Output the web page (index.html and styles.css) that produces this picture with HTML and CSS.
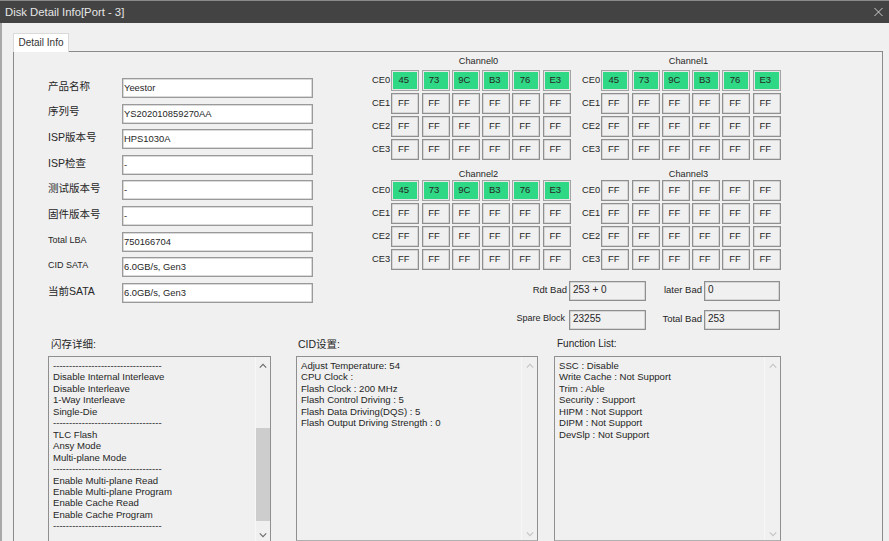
FILE: index.html
```html
<!DOCTYPE html>
<html>
<head>
<meta charset="utf-8">
<title>Disk Detail Info</title>
<link rel="stylesheet" href="styles.css">
</head>
<body>
<div class="window">
  <div class="titlebar"><span>Disk Detail Info[Port - 3]</span><svg class="close" viewBox="0 0 10 10"><path d="M.5.5l9 9M9.5.5l-9 9" fill="none" stroke="#dcdcdc" stroke-width="1"/></svg></div>
  <div class="client">
    <div class="tab">Detail Info</div>
    <div class="panel">
      <div class="top">
        <div class="form">
          <label>产品名称</label><div class="edit">Yeestor</div>
          <label>序列号</label><div class="edit">YS202010859270AA</div>
          <label>ISP版本号</label><div class="edit">HPS1030A</div>
          <label>ISP检查</label><div class="edit">-</div>
          <label>测试版本号</label><div class="edit">-</div>
          <label>固件版本号</label><div class="edit">-</div>
          <label class="small">Total LBA</label><div class="edit">750166704</div>
          <label class="small">CID SATA</label><div class="edit">6.0GB/s, Gen3</div>
          <label>当前SATA</label><div class="edit">6.0GB/s, Gen3</div>
        </div>
        <div class="right">
          <div class="channels">
            <div class="channel"><div class="ch-title">Channel0</div>
              <div class="grid">
                <span class="ce">CE0</span><b class="on">45</b><b class="on">73</b><b class="on">9C</b><b class="on">B3</b><b class="on">76</b><b class="on">E3</b>
                <span class="ce">CE1</span><b>FF</b><b>FF</b><b>FF</b><b>FF</b><b>FF</b><b>FF</b>
                <span class="ce">CE2</span><b>FF</b><b>FF</b><b>FF</b><b>FF</b><b>FF</b><b>FF</b>
                <span class="ce">CE3</span><b>FF</b><b>FF</b><b>FF</b><b>FF</b><b>FF</b><b>FF</b>
              </div></div>
            <div class="channel"><div class="ch-title">Channel1</div>
              <div class="grid">
                <span class="ce">CE0</span><b class="on">45</b><b class="on">73</b><b class="on">9C</b><b class="on">B3</b><b class="on">76</b><b class="on">E3</b>
                <span class="ce">CE1</span><b>FF</b><b>FF</b><b>FF</b><b>FF</b><b>FF</b><b>FF</b>
                <span class="ce">CE2</span><b>FF</b><b>FF</b><b>FF</b><b>FF</b><b>FF</b><b>FF</b>
                <span class="ce">CE3</span><b>FF</b><b>FF</b><b>FF</b><b>FF</b><b>FF</b><b>FF</b>
              </div></div>
            <div class="channel"><div class="ch-title low">Channel2</div>
              <div class="grid">
                <span class="ce">CE0</span><b class="on">45</b><b class="on">73</b><b class="on">9C</b><b class="on">B3</b><b class="on">76</b><b class="on">E3</b>
                <span class="ce">CE1</span><b>FF</b><b>FF</b><b>FF</b><b>FF</b><b>FF</b><b>FF</b>
                <span class="ce">CE2</span><b>FF</b><b>FF</b><b>FF</b><b>FF</b><b>FF</b><b>FF</b>
                <span class="ce">CE3</span><b>FF</b><b>FF</b><b>FF</b><b>FF</b><b>FF</b><b>FF</b>
              </div></div>
            <div class="channel"><div class="ch-title low">Channel3</div>
              <div class="grid">
                <span class="ce">CE0</span><b>FF</b><b>FF</b><b>FF</b><b>FF</b><b>FF</b><b>FF</b>
                <span class="ce">CE1</span><b>FF</b><b>FF</b><b>FF</b><b>FF</b><b>FF</b><b>FF</b>
                <span class="ce">CE2</span><b>FF</b><b>FF</b><b>FF</b><b>FF</b><b>FF</b><b>FF</b>
                <span class="ce">CE3</span><b>FF</b><b>FF</b><b>FF</b><b>FF</b><b>FF</b><b>FF</b>
              </div></div>
          </div>
          <div class="stats">
            <span class="st-l">Rdt Bad</span><div class="st-v">253 + 0</div>
            <span class="st-l">later Bad</span><div class="st-v">0</div>
            <span class="st-l wide">Spare Block</span><div class="st-v">23255</div>
            <span class="st-l">Total Bad</span><div class="st-v">253</div>
          </div>
        </div>
      </div>
      <div class="lists">
        <div class="group g1">
          <div class="g-title">闪存详细:</div>
          <div class="listbox">
            <div class="listtext">----------------------------------
Disable Internal Interleave
Disable Interleave
1-Way Interleave
Single-Die
----------------------------------
TLC Flash
Ansy Mode
Multi-plane Mode
----------------------------------
Enable Multi-plane Read
Enable Multi-plane Program
Enable Cache Read
Enable Cache Program
----------------------------------</div>
            <div class="scroll"><svg class="arrow" viewBox="0 0 10 6"><path d="M1 5l4-4 4 4" fill="none" stroke="#6a6a6a" stroke-width="1.4"/></svg><div class="track"><div class="thumb"></div></div><svg class="arrow" viewBox="0 0 10 6"><path d="M1 1l4 4 4-4" fill="none" stroke="#6a6a6a" stroke-width="1.4"/></svg></div>
          </div>
        </div>
        <div class="group g2">
          <div class="g-title">CID设置:</div>
          <div class="listbox">
            <div class="listtext">Adjust Temperature: 54
CPU Clock :
Flash Clock : 200 MHz
Flash Control Driving : 5
Flash Data Driving(DQS) : 5
Flash Output Driving Strength : 0</div>
            <div class="scroll idle"><svg class="arrow" viewBox="0 0 10 6"><path d="M1 5l4-4 4 4" fill="none" stroke="#c4c4c4" stroke-width="1.4"/></svg><div class="track"></div><svg class="arrow" viewBox="0 0 10 6"><path d="M1 1l4 4 4-4" fill="none" stroke="#c4c4c4" stroke-width="1.4"/></svg></div>
          </div>
        </div>
        <div class="group g3">
          <div class="g-title">Function List:</div>
          <div class="listbox">
            <div class="listtext">SSC : Disable
Write Cache : Not Support
Trim : Able
Security : Support
HIPM : Not Support
DIPM : Not Support
DevSlp : Not Support</div>
            <div class="scroll idle"><svg class="arrow" viewBox="0 0 10 6"><path d="M1 5l4-4 4 4" fill="none" stroke="#c4c4c4" stroke-width="1.4"/></svg><div class="track"></div><svg class="arrow" viewBox="0 0 10 6"><path d="M1 1l4 4 4-4" fill="none" stroke="#c4c4c4" stroke-width="1.4"/></svg></div>
          </div>
        </div>
      </div>
    </div>
  </div>
</div>
</body>
</html>
```

FILE: styles.css
```css
* { box-sizing: border-box; }
html, body { margin: 0; padding: 0; }
body {
  width: 889px; height: 541px; overflow: hidden;
  background: #f0f0f0; color: #262626;
  font: 10px/11.4px "Liberation Sans", "Noto Sans CJK SC", sans-serif;
}
.window { height: 541px; display: flex; flex-direction: column; }
.titlebar {
  height: 23px; flex: none; background: #434343; color: #e6e6e6;
  font-size: 11.3px; line-height: 22px; padding: 0 6px 0 5px;
  border-top: 1px solid #8a8a8a;
  display: flex; justify-content: space-between; align-items: center;
}
.close { width: 9px; height: 10px; }
.client { flex: 1; min-height: 0; padding: 10px 0 0 11px; background: #f0f0f0; border-left: 2px solid #a9a9a9; }
.tab {
  width: 56px; height: 19px; background: #fff; border: 1px solid #d9d9d9; border-bottom: 0;
  text-align: center; line-height: 18px; font-size: 10px; color: #333;
  position: relative; z-index: 1;
}
.panel {
  width: 870px; height: 490px; border: 1px solid #8a8a8a; border-bottom: 0; margin-top: -1px; background: #f0f0f0;
  padding: 26px 0 0 34px;
}
.top { display: flex; height: 258px; }
.form { width: 265px; display: grid; grid-template-columns: 74px 191px; grid-auto-rows: 20px; row-gap: 5.6px; align-items: center; align-self: flex-start; }
.form label { font-size: 10.5px; margin-top: -3px; }
.form label.small { font-size: 9px; margin-top: -2px; }
.edit { height: 20px; background: #fff; border: 1px solid #9a9a9a; box-shadow: inset 0 0 0 .5px #b5b5b5; font-size: 9.4px; line-height: 17px; padding-left: 1px; }
.right { margin-left: 59px; width: 420px; margin-top: -26px; }
.channels { display: grid; grid-template-columns: 210px 210px; row-gap: 6px; }
.channel { width: 199px; }
.ch-title { text-align: center; height: 18px; line-height: 18px; font-size: 9.2px; padding-left: 14px; }
.ch-title.low { height: 14px; line-height: 16px; }
.grid { display: grid; grid-template-columns: 17px repeat(6, 28px); column-gap: 2.3px; row-gap: 2px; }
.ce { font-size: 9.3px; line-height: 21px; }
.grid b { height: 21px; font-weight: normal; font-size: 9.5px; line-height: 17px; text-align: center; padding-right: 3px; background: #f0f0f0; border: 1px solid #8f8f8f; box-shadow: inset 0 0 0 .5px #bbb; }
.grid b.on { background: #2fd884; border-color: #a3a3a3; box-shadow: inset 0 0 0 1px #e6e6e6; }
.stats { display: grid; grid-template-columns: 197px 77px 58px 76px; grid-auto-rows: 20px; row-gap: 9px; margin-top: 11px; align-items: center; }
.st-l { text-align: right; padding-right: 2px; font-size: 9.5px; margin-top: -3px; }
.st-l.wide { padding-right: 4px; font-size: 9px; }
.st-v { height: 20px; border: 1px solid #8f8f8f; box-shadow: inset 0 0 0 .5px #bbb; font-size: 10px; line-height: 16px; padding-left: 3px; background: #f0f0f0; }
.lists { display: flex; }
.group { flex: none; }
.g1 { width: 223px; margin-right: 25px; }
.g2 { width: 242px; margin-right: 16px; }
.g3 { width: 227px; }
.g-title { height: 20px; line-height: 16px; font-size: 10.5px; padding-left: 2px; }
.g1 .g-title, .g3 .g-title { padding-left: 3px; }
.g3 .g-title { font-size: 10px; }
.listbox { height: 185px; border: 1px solid #8f8f8f; border-bottom-color: #b0b0b0; display: flex; background: #f0f0f0; padding: 3px 0 0 4px; }
.g1 .listbox { border-bottom: 0; }
.listtext { flex: 1; white-space: pre-line; font-size: 9.6px; line-height: 11.45px; }
.scroll { width: 15px; margin-top: -3px; display: flex; flex-direction: column; align-items: center; padding: 6px 0 3px; border-left: 1px solid #f7f7f7; }
.scroll.idle { width: 16px; }
.arrow { width: 8px; height: 6px; flex: none; }
.track { flex: 1; width: 100%; margin: 9px 0 6px; padding-top: 50px; }
.thumb { height: 93px; background: #cdcdcd; }
```
